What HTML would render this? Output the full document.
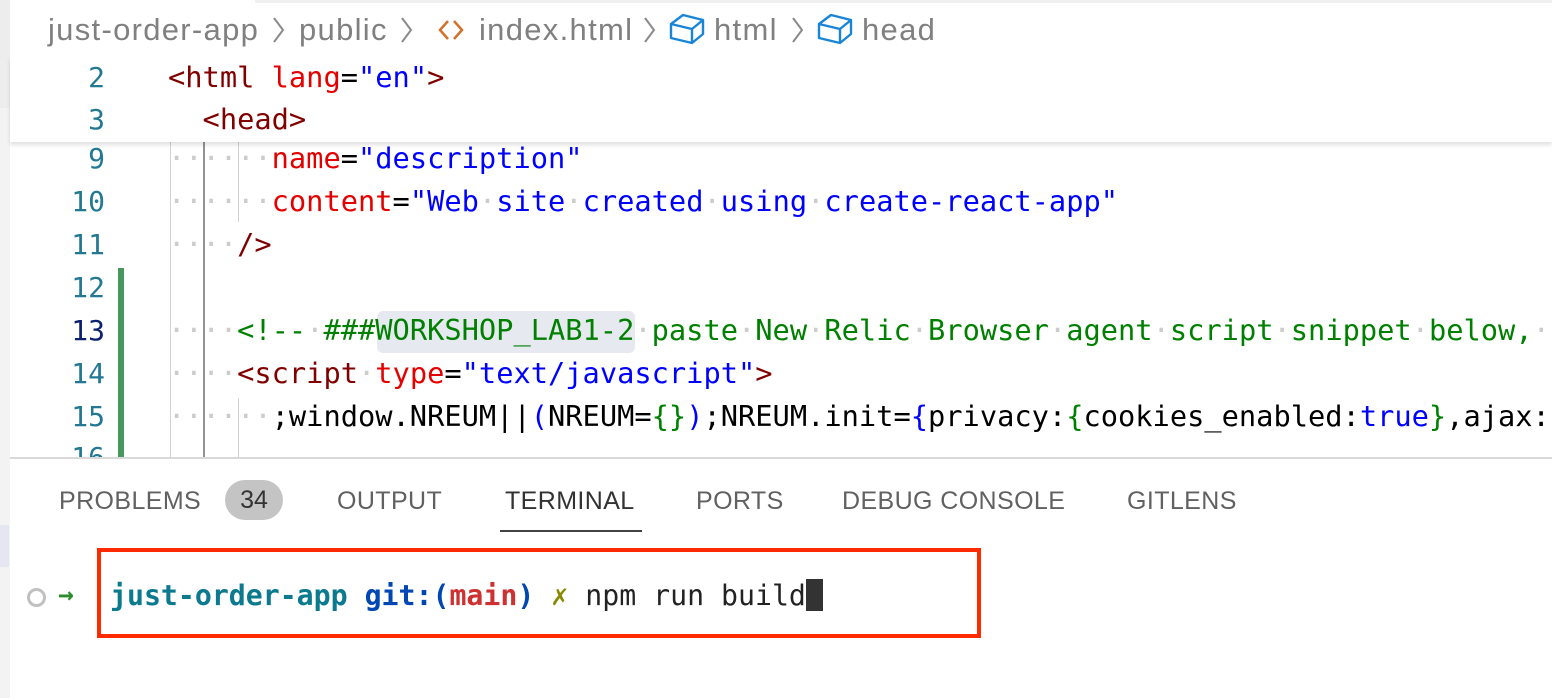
<!DOCTYPE html>
<html><head><style>
body{margin:0;width:1552px;height:698px;overflow:hidden;background:#fff;position:relative;font-family:"Liberation Sans",sans-serif}
.a{position:absolute;white-space:pre}
.m{font-family:"DejaVu Sans Mono","Liberation Mono",monospace;font-size:28.7px;line-height:43px}
.ln{position:absolute;width:95px;text-align:right;left:10px;color:#237893;font-family:"DejaVu Sans Mono",monospace;font-size:28px;line-height:43px}
.t{color:#800000}.at{color:#e50000}.s{color:#0000ff}.c{color:#008000}.k{color:#000}
.d{color:#ccc}
.tab{position:absolute;top:487px;font-size:25px;color:#616161;letter-spacing:0.4px}
.bc{position:absolute;top:10px;font-size:31px;color:#808080;line-height:40px;letter-spacing:1.3px}
</style></head><body>
<div class="a" style="left:0;top:0;width:10px;height:698px;background:#f3f3f3"></div>
<div class="a" style="left:0;top:525px;width:9px;height:42px;background:#e4e6f1"></div>
<div class="a" style="left:255px;top:0;width:1297px;height:3px;background:#f0f0f0"></div>
<div class="a" style="left:0;top:0;width:10px;height:108px;background:#ededed"></div>

<!-- breadcrumb -->
<div class="bc" style="left:48px">just-order-app</div>
<div class="bc" style="left:299px">public</div>
<div class="bc" style="left:479px">index.html</div>
<div class="bc" style="left:714px">html</div>
<div class="bc" style="left:862px">head</div>
<svg class="a" style="left:0;top:0" width="1000" height="60">
<g fill="none" stroke="#8a8a8a" stroke-width="2">
<polyline points="274,18 283,30 274,42"/>
<polyline points="402,18 411,30 402,42"/>
<polyline points="645,18 654,30 645,42"/>
<polyline points="793,18 802,30 793,42"/>
</g>
<g fill="none" stroke="#d2702c" stroke-width="2.5">
<polyline points="448,21 440,30 448,39"/><polyline points="454,21 462,30 454,39"/>
</g>
<g fill="none" stroke="#1a85d6" stroke-width="2.4" stroke-linejoin="round">
<path d="M671 24 L683 15 L703 20 V34 L692 43 L671 38 Z M671 24 L692 29 L703 20 M692 29 V43"/>
<path d="M819 24 L831 15 L851 20 V34 L840 43 L819 38 Z M819 24 L840 29 L851 20 M840 29 V43"/>
</g>
</svg>

<!-- indent guides -->
<div class="a" style="left:170px;top:142px;width:1px;height:316px;background:#d3d3d3"></div>
<div class="a" style="left:203px;top:142px;width:2px;height:316px;background:#939393"></div>
<div class="a" style="left:238px;top:142px;width:1px;height:80px;background:#d3d3d3"></div>
<div class="a" style="left:238px;top:398px;width:1px;height:60px;background:#d3d3d3"></div>
<div class="a" style="left:118px;top:268px;width:6px;height:190px;background:#48985d"></div>
<div class="a" style="left:377px;top:311px;width:258px;height:42px;background:#e6eaf0;border-radius:6px"></div>

<div class="ln" style="top:436px">16</div>
<div class="ln" style="top:137px">9</div>
<div class="ln" style="top:180px">10</div>
<div class="ln" style="top:223px">11</div>
<div class="ln" style="top:266px">12</div>
<div class="ln" style="top:309px;color:#0b216f">13</div>
<div class="ln" style="top:352px">14</div>
<div class="ln" style="top:395px">15</div>

<div class="a m" style="left:168px;top:137px"><span class="d">······</span><span class="at">name</span><span class="k">=</span><span class="s">"description"</span></div>
<div class="a m" style="left:168px;top:180px"><span class="d">······</span><span class="at">content</span><span class="k">=</span><span class="s">"Web<span class="d">·</span>site<span class="d">·</span>created<span class="d">·</span>using<span class="d">·</span>create-react-app"</span></div>
<div class="a m" style="left:168px;top:223px"><span class="d">····</span><span class="t">/&gt;</span></div>
<div class="a m" style="left:168px;top:309px"><span class="d">····</span><span class="c">&lt;!--<span class="d">·</span>###WORKSHOP_LAB1-2<span class="d">·</span>paste<span class="d">·</span>New<span class="d">·</span>Relic<span class="d">·</span>Browser<span class="d">·</span>agent<span class="d">·</span>script<span class="d">·</span>snippet<span class="d">·</span>below,<span class="d">·</span></span></div>
<div class="a m" style="left:168px;top:352px"><span class="d">····</span><span class="t">&lt;script</span><span class="d">·</span><span class="at">type</span><span class="k">=</span><span class="s">"text/javascript"</span><span class="t">&gt;</span></div>
<div class="a m" style="left:168px;top:395px"><span class="d">······</span><span class="k">;window.NREUM||<span class="s">(</span>NREUM=<span class="c">{}</span><span class="s">)</span>;NREUM.init=<span class="s">{</span>privacy:<span class="c">{</span>cookies_enabled:<span class="s">true</span><span class="c">}</span>,ajax:</span></div>

<!-- sticky -->
<div class="a" style="left:10px;top:56px;width:1542px;height:86px;background:#fff;box-shadow:0 3px 4px rgba(0,0,0,0.12)"></div>
<div class="ln" style="top:56px">2</div>
<div class="ln" style="top:98px">3</div>
<div class="a m" style="left:168px;top:56px"><span class="t">&lt;html</span> <span class="at">lang</span><span class="k">=</span><span class="s">"en"</span><span class="t">&gt;</span></div>
<div class="a m" style="left:168px;top:98px">  <span class="t">&lt;head&gt;</span></div>

<!-- panel -->
<div class="a" style="left:10px;top:457px;width:1542px;height:241px;background:#fff;border-top:2px solid #d9d9d9"></div>
<div class="tab" style="left:59px">PROBLEMS</div>
<div class="a" style="left:225px;top:480px;width:58px;height:40px;border-radius:20px;background:#c4c4c4;color:#333;font-size:25px;text-align:center;line-height:40px">34</div>
<div class="tab" style="left:337px">OUTPUT</div>
<div class="tab" style="left:505px;color:#333">TERMINAL</div>
<div class="a" style="left:500px;top:530px;width:142px;height:2px;background:#424242"></div>
<div class="tab" style="left:696px">PORTS</div>
<div class="tab" style="left:842px">DEBUG CONSOLE</div>
<div class="tab" style="left:1127px">GITLENS</div>

<div class="a" style="left:97px;top:548px;width:876px;height:82px;border:4px solid #ff2a00"></div>
<div class="a" style="left:27px;top:588px;width:13px;height:13px;border:3px solid #c0c0c0;border-radius:50%"></div>
<div class="a m" style="left:58px;top:574px;font-size:26px;color:#2e8b2e;font-weight:bold">&#x2192;</div>
<div class="a m" style="left:110px;top:574px;font-size:28.2px"><b style="color:#0b7a8f">just-order-app</b> <b style="color:#0047b3">git:(</b><b style="color:#cd3131">main</b><b style="color:#0047b3">)</b> <span style="color:#8a8a00">✗</span> <span style="color:#222">npm run build</span><span style="display:inline-block;width:17px;height:32px;background:#333;vertical-align:-6px"></span></div>
</body></html>
